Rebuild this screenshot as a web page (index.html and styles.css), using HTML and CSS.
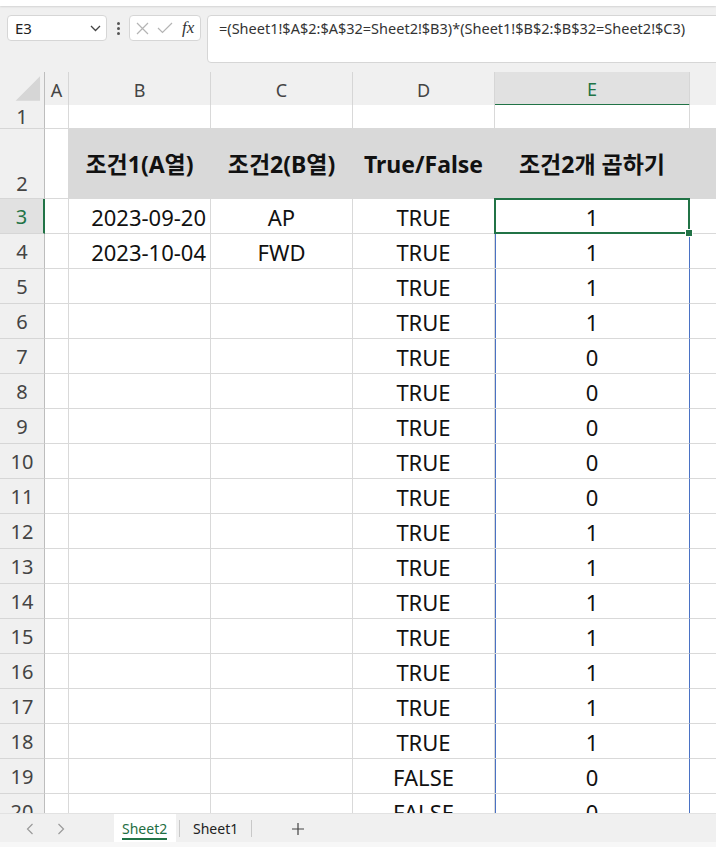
FILE: index.html
```html
<!DOCTYPE html>
<html lang="ko">
<head>
    <meta charset="UTF-8">
    <title>Sheet2 - Excel</title>
    <link rel="stylesheet" href="styles.css">
</head>
<body>
    <div class="ribbon"></div>

    <div class="formula-bar">
        <div class="name-box">
            <span>E3</span>
            <svg width="11" height="7" viewBox="0 0 11 7"><path d="M1 1l4.5 4.5L10 1" fill="none" stroke="#444" stroke-width="1.3"/></svg>
        </div>
        <div class="dots"><span></span><span></span><span></span></div>
        <div class="fx-box">
            <svg width="13" height="13" viewBox="0 0 13 13"><path d="M1 1l11 11M12 1L1 12" stroke="#b4b4b4" stroke-width="1.2"/></svg>
            <svg width="16" height="12" viewBox="0 0 16 12"><path d="M1 6l4.5 4.5L15 1" fill="none" stroke="#b4b4b4" stroke-width="1.2"/></svg>
            <span class="fx">fx</span>
        </div>
        <div class="formula">=(Sheet1!$A$2:$A$32=Sheet2!$B3)*(Sheet1!$B$2:$B$32=Sheet2!$C3)</div>
    </div>

    <div class="sheet">
        <div class="row cols">
            <div class="corner"><svg width="45" height="33" viewBox="0 0 45 33"><polygon points="41,4 41,29 16,29" fill="#d6d6d6"/></svg></div>
            <div>A</div><div>B</div><div>C</div><div>D</div><div class="on">E</div><div></div>
        </div>
        <div class="row r1">
            <div class="rh">1</div><div></div><div></div><div></div><div></div><div></div><div></div>
        </div>
        <div class="row r2">
            <div class="rh">2</div><div></div>
            <div class="fill">조건1(A열)</div><div class="fill">조건2(B열)</div><div class="fill">True/False</div><div class="fill">조건2개 곱하기</div><div class="fill"></div>
        </div>
        <div class="row">
            <div class="rh on">3</div><div></div><div class="date">2023-09-20</div><div>AP</div><div>TRUE</div><div class="sel">1</div><div></div>
        </div>
        <div class="row">
            <div class="rh">4</div><div></div><div class="date">2023-10-04</div><div>FWD</div><div>TRUE</div><div class="spill">1</div><div></div>
        </div>
        <div class="row"><div class="rh">5</div><div></div><div></div><div></div><div>TRUE</div><div class="spill">1</div><div></div></div>
        <div class="row"><div class="rh">6</div><div></div><div></div><div></div><div>TRUE</div><div class="spill">1</div><div></div></div>
        <div class="row"><div class="rh">7</div><div></div><div></div><div></div><div>TRUE</div><div class="spill">0</div><div></div></div>
        <div class="row"><div class="rh">8</div><div></div><div></div><div></div><div>TRUE</div><div class="spill">0</div><div></div></div>
        <div class="row"><div class="rh">9</div><div></div><div></div><div></div><div>TRUE</div><div class="spill">0</div><div></div></div>
        <div class="row"><div class="rh">10</div><div></div><div></div><div></div><div>TRUE</div><div class="spill">0</div><div></div></div>
        <div class="row"><div class="rh">11</div><div></div><div></div><div></div><div>TRUE</div><div class="spill">0</div><div></div></div>
        <div class="row"><div class="rh">12</div><div></div><div></div><div></div><div>TRUE</div><div class="spill">1</div><div></div></div>
        <div class="row"><div class="rh">13</div><div></div><div></div><div></div><div>TRUE</div><div class="spill">1</div><div></div></div>
        <div class="row"><div class="rh">14</div><div></div><div></div><div></div><div>TRUE</div><div class="spill">1</div><div></div></div>
        <div class="row"><div class="rh">15</div><div></div><div></div><div></div><div>TRUE</div><div class="spill">1</div><div></div></div>
        <div class="row"><div class="rh">16</div><div></div><div></div><div></div><div>TRUE</div><div class="spill">1</div><div></div></div>
        <div class="row"><div class="rh">17</div><div></div><div></div><div></div><div>TRUE</div><div class="spill">1</div><div></div></div>
        <div class="row"><div class="rh">18</div><div></div><div></div><div></div><div>TRUE</div><div class="spill">1</div><div></div></div>
        <div class="row"><div class="rh">19</div><div></div><div></div><div></div><div>FALSE</div><div class="spill">0</div><div></div></div>
        <div class="row"><div class="rh">20</div><div></div><div></div><div></div><div>FALSE</div><div class="spill">0</div><div></div></div>
    </div>

    <div class="tabs">
        <div class="nav">
            <svg width="8" height="12" viewBox="0 0 8 12"><path d="M6.5 1L1.5 6l5 5" fill="none" stroke="#9a9a9a" stroke-width="1.2"/></svg>
            <svg width="8" height="12" viewBox="0 0 8 12"><path d="M1.5 1l5 5-5 5" fill="none" stroke="#9a9a9a" stroke-width="1.2"/></svg>
        </div>
        <div class="tab active">Sheet2</div>
        <div class="sep"></div>
        <div class="tab">Sheet1</div>
        <div class="sep"></div>
        <div class="add">
            <svg width="14" height="14" viewBox="0 0 14 14"><path d="M7 1v12M1 7h12" stroke="#444" stroke-width="1.2"/></svg>
        </div>
    </div>
</body>
</html>
```

FILE: styles.css
```css
* {
    box-sizing: border-box;
}
body {
    margin: 0;
    width: 716px;
    height: 847px;
    overflow: hidden;
    background: #f0f0f0;
    font-family: "Noto Sans", "Noto Sans CJK KR", sans-serif;
    color: #111;
}
.ribbon {
    height: 6px;
    background: #fff;
    box-shadow: 0 1px 2px rgba(0, 0, 0, 0.12);
}

/* formula bar */
.formula-bar {
    display: flex;
    align-items: flex-start;
    height: 66px;
    padding: 9px 0 0 7px;
}
.name-box {
    width: 100px;
    height: 26px;
    background: #fff;
    border: 1px solid #d6d6d6;
    border-radius: 4px;
    display: flex;
    align-items: center;
    justify-content: space-between;
    padding: 0 5px 0 7px;
    font-size: 15px;
    color: #222;
}
.dots {
    width: 22px;
    height: 26px;
    display: flex;
    flex-direction: column;
    align-items: center;
    justify-content: center;
    gap: 2px;
}
.dots span {
    width: 3px;
    height: 3px;
    border-radius: 50%;
    background: #555;
}
.fx-box {
    width: 72px;
    height: 26px;
    background: #fff;
    border: 1px solid #d6d6d6;
    border-radius: 4px;
    display: flex;
    align-items: center;
    gap: 8px;
    padding: 0 0 0 6px;
}
.fx {
    font-family: "Liberation Serif", serif;
    font-style: italic;
    font-size: 17px;
    color: #333;
    margin-left: 1px;
}
.formula {
    flex: 1;
    height: 48px;
    margin-left: 6px;
    margin-right: -10px;
    background: #fff;
    border: 1px solid #d6d6d6;
    border-radius: 4px;
    padding: 3px 11px;
    font-size: 14.5px;
    line-height: 19px;
    color: #333;
    white-space: nowrap;
}

/* grid */
.sheet {
    height: 741px;
    overflow: hidden;
}
.row {
    display: grid;
    grid-template-columns: 45px 24px 142px 142px 142px 195px 100px;
    height: 35px;
}
.row > div {
    position: relative;
    display: flex;
    align-items: center;
    justify-content: center;
    background: #fff;
    border-right: 1px solid #d9d9d9;
    border-bottom: 1px solid #d9d9d9;
    font-size: 22px;
    line-height: 1;
    white-space: nowrap;
    padding-top: 2px;
}
.row > .rh {
    background: #f0f0f0;
    border-right-color: #bdbdbd;
    border-bottom-color: #d6d6d6;
    font-size: 20px;
    color: #444;
    padding-top: 1px;
}
.rh.on {
    background: #e1e1e1;
    color: #217346;
    border-right: 2px solid #217346;
}
.cols {
    height: 33px;
}
.cols > div {
    background: #f0f0f0 !important;
    border-bottom-color: #bdbdbd !important;
    border-right-color: #d6d6d6 !important;
    font-size: 18px;
    color: #444;
}
.cols > .corner {
    padding: 0;
    border-right-color: #bdbdbd !important;
}
.cols > .on {
    background: #e1e1e1 !important;
    color: #217346;
    border-bottom: 2px solid #217346 !important;
}
.r1 {
    height: 24px;
}
.r2 {
    height: 70px;
}
.r2 > .rh {
    align-items: flex-end;
    padding-bottom: 4px;
}
.row > .fill {
    background: #d9d9d9;
    border-color: #d9d9d9;
    font-weight: bold;
    font-size: 23px;
}
.row > .date {
    justify-content: flex-end;
    padding-right: 4px;
}

/* selection + spill range */
.sel::after {
    content: "";
    position: absolute;
    left: -1px;
    top: -1px;
    right: -1px;
    bottom: -1px;
    border: 2px solid #217346;
}
.sel::before {
    content: "";
    position: absolute;
    right: -4px;
    bottom: -4px;
    width: 6px;
    height: 6px;
    background: #217346;
    border: 1px solid #fff;
    z-index: 2;
}
.row > .spill {
    border-right-color: #4a72c4;
    box-shadow: inset 1px 0 #4a72c4;
}

/* sheet tabs */
.tabs {
    height: 34px;
    display: flex;
    align-items: flex-start;
    border-bottom: 5px solid #f7f7f7;
    border-top: 1px solid #e2e2e2;
}
.nav {
    width: 114px;
    height: 29px;
    display: flex;
    align-items: center;
    gap: 23px;
    padding-left: 26px;
}
.tab {
    height: 28px;
    padding: 0 10px;
    display: flex;
    align-items: center;
    font-size: 14px;
    color: #222;
}
.tab.active {
    position: relative;
    width: 62px;
    padding: 0 8px;
    background: #fff;
    color: #1f6e43;
}
.tab.active::after {
    content: "";
    position: absolute;
    left: 8px;
    right: 9px;
    bottom: 2px;
    height: 2px;
    background: #217346;
}
.sep {
    width: 1px;
    height: 17px;
    margin: 6px 3px 0;
    background: #c8c8c8;
}
.add {
    height: 29px;
    display: flex;
    align-items: center;
    margin-left: 36px;
}
```
